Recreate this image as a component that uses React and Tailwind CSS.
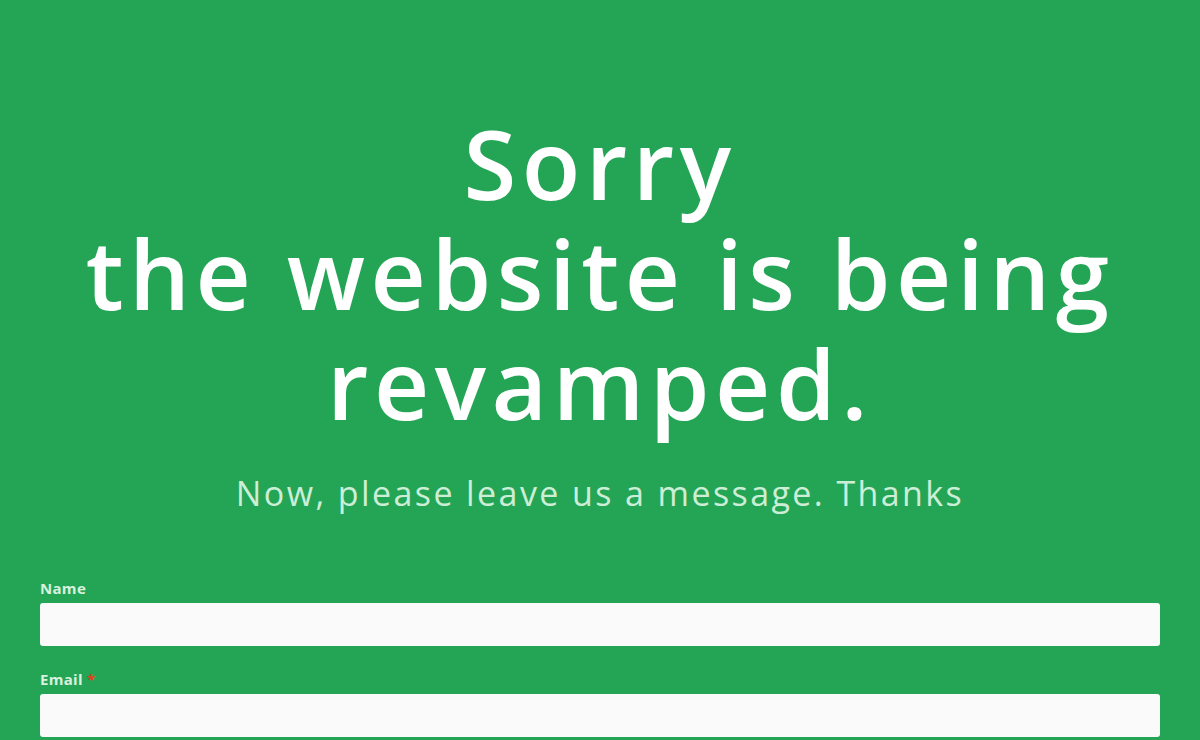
export default function App() {
  return (
    <div className="min-h-[740px] w-full bg-[#24a556] font-['Open_Sans',sans-serif] overflow-hidden">
      <div className="pt-[108px] text-center">
        <h1 className="text-[96px] leading-[110px] font-semibold text-white tracking-[5.5px]">
          Sorry
          <br />
          the website is being
          <br />
          revamped.
        </h1>
        <p className="mt-[33px] text-[34px] leading-[44px] text-[#cdeed6] tracking-[2.4px]">
          Now, please leave us a message. Thanks
        </p>
      </div>
      <form className="mt-[64px] px-10 flex flex-col">
        <label className="text-[15px] leading-[18px] font-bold text-[#d8f1df] mb-[6px] tracking-[0.3px]">Name</label>
        <input className="h-[43px] w-full rounded-[3px] bg-[#fafafa] outline-none" />
        <label className="mt-[24px] text-[15px] leading-[18px] font-bold text-[#d8f1df] mb-[6px] tracking-[0.3px]">
          Email <span className="text-[#e2401c]">*</span>
        </label>
        <input className="h-[43px] w-full rounded-[3px] bg-[#fafafa] outline-none" />
      </form>
    </div>
  );
}
